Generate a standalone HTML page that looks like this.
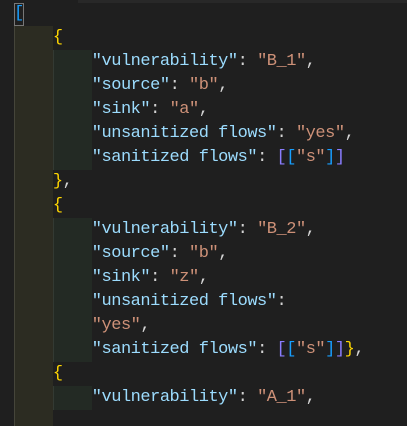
<!DOCTYPE html>
<html><head><style>
body{margin:0;width:407px;height:406px;background:#1f1f1f;overflow:hidden;position:relative;font-family:"Liberation Mono",monospace;font-size:17px;letter-spacing:-0.48px}
.l{position:absolute;left:14px;height:24px;line-height:24px;white-space:pre;color:#d4d4d4}
.k{color:#9cdcfe}.s{color:#ce9178}.g{color:#ffd700}.b{color:#179fff}.p{color:#8a7dff}
.ga{position:absolute;left:14px;width:39px;top:26px;height:400px;background:#2c2c22;border-left:1px solid #45453a;box-sizing:border-box}
.gb{position:absolute;left:53px;width:39px;background:#232a24;border-left:1px solid #333a33;box-sizing:border-box}
</style></head><body>
<div style="position:absolute;left:78px;top:0;width:329px;height:3px;background:#282828"></div>
<div class="ga"></div>
<div class="gb" style="top:50px;height:120px"></div>
<div class="gb" style="top:218px;height:144px"></div>
<div class="gb" style="top:386px;height:24px"></div>
<div style="position:absolute;left:14px;top:3px;width:10px;height:23px;border:1px solid #777;box-sizing:border-box"></div>
<div class="l" style="top:2px"><span class="b">[</span></div>
<div class="l" style="top:26px">    <span class="g">{</span></div>
<div class="l" style="top:50px">        <span class="k">"vulnerability"</span>: <span class="s">"B_1"</span>,</div>
<div class="l" style="top:74px">        <span class="k">"source"</span>: <span class="s">"b"</span>,</div>
<div class="l" style="top:98px">        <span class="k">"sink"</span>: <span class="s">"a"</span>,</div>
<div class="l" style="top:122px">        <span class="k">"unsanitized flows"</span>: <span class="s">"yes"</span>,</div>
<div class="l" style="top:146px">        <span class="k">"sanitized flows"</span>: <span class="p">[</span><span class="b">[</span><span class="s">"s"</span><span class="b">]</span><span class="p">]</span></div>
<div class="l" style="top:170px">    <span class="g">}</span>,</div>
<div class="l" style="top:194px">    <span class="g">{</span></div>
<div class="l" style="top:218px">        <span class="k">"vulnerability"</span>: <span class="s">"B_2"</span>,</div>
<div class="l" style="top:242px">        <span class="k">"source"</span>: <span class="s">"b"</span>,</div>
<div class="l" style="top:266px">        <span class="k">"sink"</span>: <span class="s">"z"</span>,</div>
<div class="l" style="top:290px">        <span class="k">"unsanitized flows"</span>:</div>
<div class="l" style="top:314px">        <span class="s">"yes"</span>,</div>
<div class="l" style="top:338px">        <span class="k">"sanitized flows"</span>: <span class="p">[</span><span class="b">[</span><span class="s">"s"</span><span class="b">]</span><span class="p">]</span><span class="g">}</span>,</div>
<div class="l" style="top:362px">    <span class="g">{</span></div>
<div class="l" style="top:386px">        <span class="k">"vulnerability"</span>: <span class="s">"A_1"</span>,</div>
</body></html>
